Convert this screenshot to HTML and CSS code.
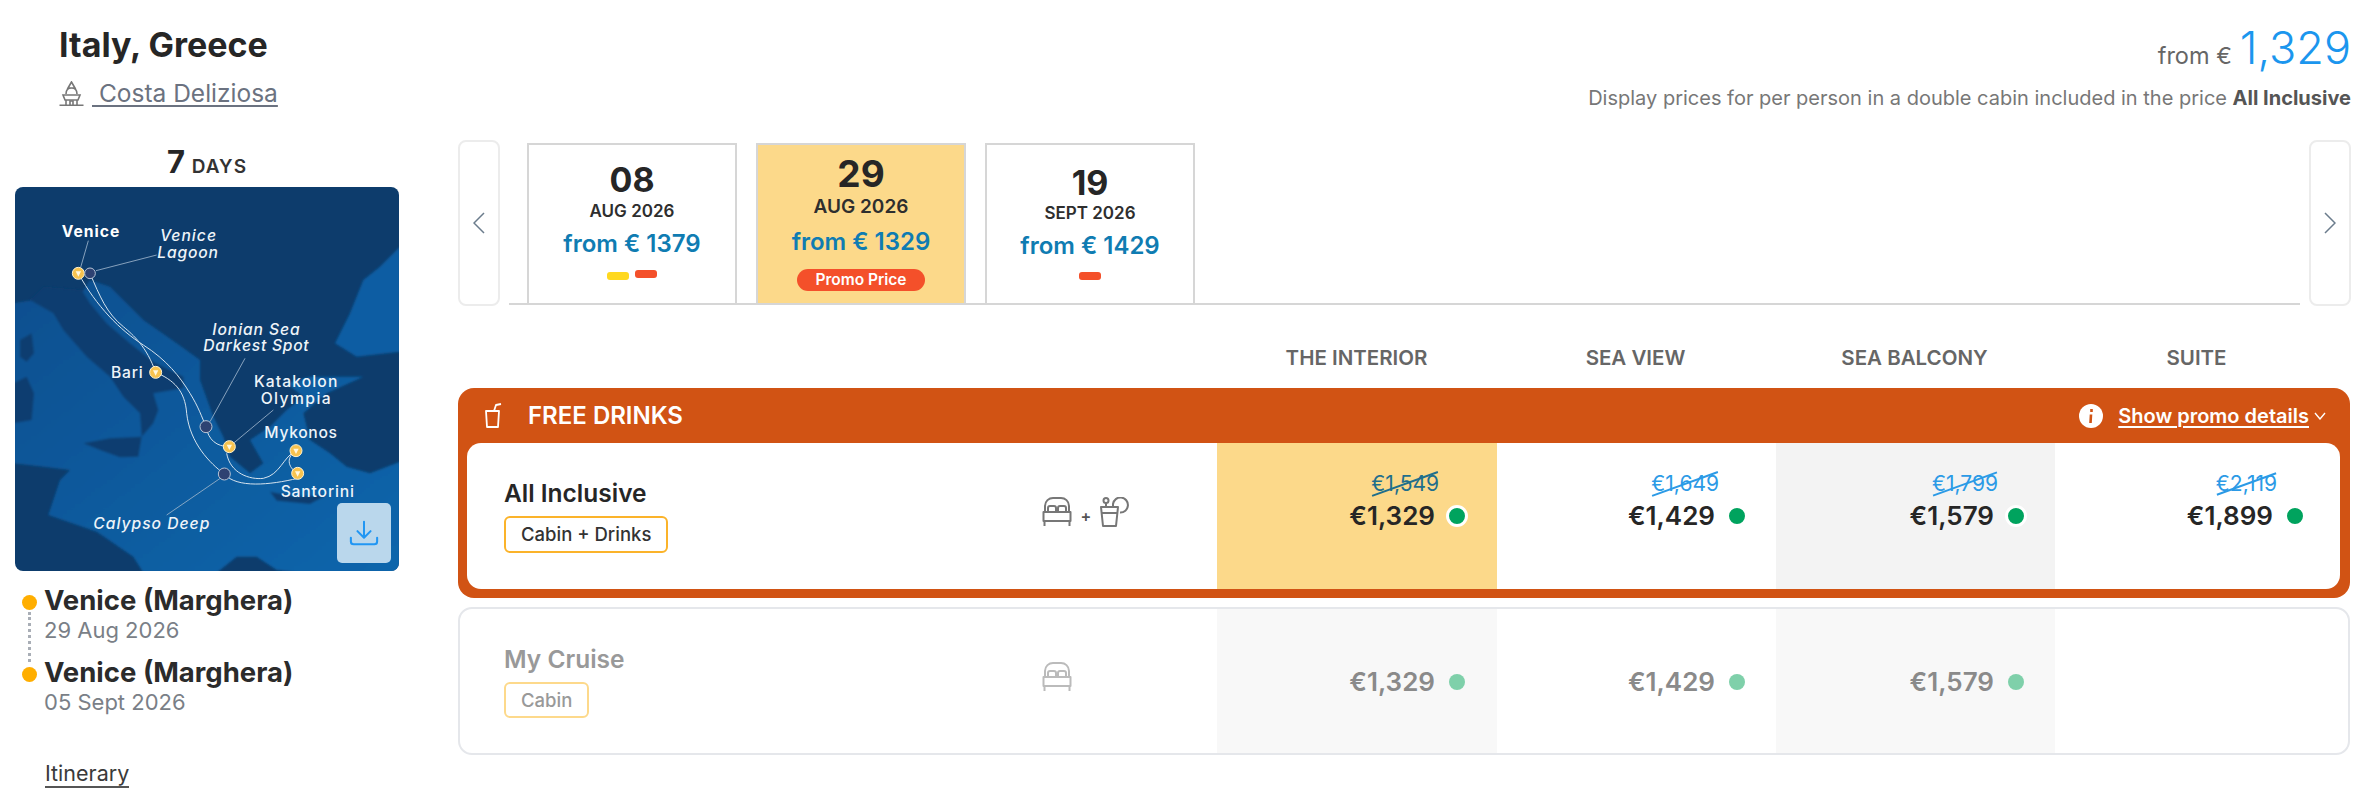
FILE: index.html
```html
<!DOCTYPE html>
<html lang="en">
<head>
<meta charset="UTF-8">
<title>Italy, Greece - Costa Deliziosa</title>
<link rel="stylesheet" href="styles.css">
</head>
<body>
<div class="page">

  <aside class="side">
    <h1 class="title">Italy, Greece</h1>
    <div class="ship">
      <svg class="ship-icon" viewBox="0 0 25 25" fill="none" stroke="#777" stroke-width="1.6">
        <path d="M12.5 1 L9 7 H16 Z M7 13 C7 9 9 7 12.5 7 C16 7 18 9 18 13"/>
        <path d="M4 14 H21 L19 19 H6 Z"/>
        <path d="M7 19 V24 M18 19 V24 M11 24 V20 H14 V24 M0.5 24.2 H24.5"/>
      </svg>
      <a class="ship-name">&nbsp;Costa Deliziosa</a>
    </div>
    <div class="days"><b>7</b> DAYS</div>

    <div class="map">
      <svg class="map-img" viewBox="15 21 1152 1152">
        <defs>
          <linearGradient id="sea" x1="0" y1="0" x2="1" y2="1">
            <stop offset="0" stop-color="#0d4f8f"/>
            <stop offset="1" stop-color="#0a66ac"/>
          </linearGradient>
          <filter id="soft"><feGaussianBlur stdDeviation="3"/></filter>
        </defs>
        <rect x="15" y="21" width="1152" height="1152" fill="#0d3c6c"/>
        <g filter="url(#soft)">
          <path fill="url(#sea)" d="M10 370 L70 360 L215 340 L240 300 L300 320 L400 420 L500 490 L570 540 L570 600 L610 710 L640 770 L660 830 L720 880 L760 850 L720 780 L780 740 L830 690 L880 650 L830 610 L900 590 L1060 590 L950 640 L880 700 L900 780 L960 820 L1010 860 L1080 880 L1170 845 L1170 1178 L870 1178 L800 1170 L740 1130 L680 1130 L620 1178 L400 1178 L370 1130 L260 1055 L115 1005 L150 900 L180 870 L100 860 L10 850 Z"/>
          <path fill="#0e3e70" d="M60 360 L130 400 L160 450 L230 530 L300 590 L340 650 L390 700 L395 770 L430 730 L445 690 L430 640 L520 625 L520 590 L430 545 L360 490 L290 430 L240 370 L215 330 L100 320 Z"/>
          <path fill="#0e3e70" d="M30 480 L65 460 L72 520 L50 545 L30 530 Z M10 610 L50 590 L72 640 L65 720 L10 730 Z M220 790 L300 775 L395 770 L385 830 L330 832 L270 810 Z M780 935 L860 950 L950 945 L900 972 L800 962 Z"/>
          <path fill="#0b5da3" d="M1170 200 L1110 260 L1060 300 L1020 400 L975 490 L1040 530 L1170 515 Z"/>
        </g>
        <g fill="none" stroke="#d5e3ee" stroke-width="3">
          <path d="M205 280 C260 380 330 450 400 495 C470 540 510 590 540 640 C565 680 575 710 588 740 C595 780 620 800 658 800"/>
          <path d="M240 280 C270 350 290 400 340 440 C370 465 410 500 437 577"/>
          <path d="M650 820 C660 880 720 900 760 895 C810 885 820 830 858 812 C830 830 830 860 863 880"/>
          <path d="M863 895 C780 915 680 925 643 882 C600 850 540 790 530 700 C525 630 490 600 437 577"/>
        </g>
        <g stroke="#9fb6cc" stroke-width="2.5" fill="none">
          <path d="M235 182 L212 262 M440 225 L258 272 M705 535 L600 725 M790 690 L670 790 M470 1005 L635 892"/>
        </g>
        <g fill="#f7c34f" stroke="#fff3cf" stroke-width="3">
          <circle cx="205" cy="280" r="18"/>
          <circle cx="437" cy="577" r="18"/>
          <circle cx="658" cy="800" r="18"/>
          <circle cx="858" cy="812" r="18"/>
          <circle cx="863" cy="880" r="18"/>
        </g>
        <g fill="#fff8e0">
          <path d="M197 274 H213 L205 290 Z M429 571 H445 L437 587 Z M650 794 H666 L658 810 Z M850 806 H866 L858 822 Z M855 874 H871 L863 890 Z"/>
        </g>
        <g fill="#2e4272" stroke="#b7c4d6" stroke-width="3">
          <circle cx="240" cy="280" r="16"/>
          <circle cx="588" cy="740" r="18"/>
          <circle cx="643" cy="882" r="18"/>
        </g>
        <g class="map-labels" fill="#eef4f9">
          <text x="155" y="170" class="map-strong" textLength="173">Venice</text>
          <text x="450" y="184" class="map-it" textLength="168">Venice</text>
          <text x="442" y="234" class="map-it" textLength="182">Lagoon</text>
          <text x="607" y="464" class="map-it" textLength="262">Ionian Sea</text>
          <text x="580" y="514" class="map-it" textLength="316">Darkest Spot</text>
          <text x="303" y="594" textLength="95">Bari</text>
          <text x="732" y="622" textLength="250">Katakolon</text>
          <text x="752" y="672" textLength="210">Olympia</text>
          <text x="763" y="774" textLength="218">Mykonos</text>
          <text x="812" y="950" textLength="220">Santorini</text>
          <text x="250" y="1047" class="map-it" textLength="348">Calypso Deep</text>
        </g>
      </svg>
      <button class="map-dl">
        <svg viewBox="0 0 32 28" fill="none" stroke="#2196f3" stroke-width="2.2" stroke-linecap="round" stroke-linejoin="round">
          <path d="M16 2 V18 M9 12 L16 19 L23 12 M2 19 V23 C2 25 3 26 5 26 H27 C29 26 30 25 30 23 V19"/>
        </svg>
      </button>
    </div>

    <div class="stops">
      <div class="stop">
        <span class="stop-dot"></span>
        <div><div class="stop-name">Venice (Marghera)</div><div class="stop-date">29 Aug 2026</div></div>
      </div>
      <div class="stop">
        <span class="stop-dot"></span>
        <div><div class="stop-name">Venice (Marghera)</div><div class="stop-date">05 Sept 2026</div></div>
      </div>
    </div>
    <a class="itinerary">Itinerary</a>
  </aside>

  <main class="main">
    <div class="from"><span class="from-label">from €</span> <span class="from-num">1,329</span></div>
    <p class="note">Display prices for per person in a double cabin included in the price <b>All Inclusive</b></p>

    <div class="dates">
      <button class="arrow">
        <svg viewBox="0 0 12 22" fill="none" stroke="#6b7c8c" stroke-width="1.5"><path d="M11 1 L1 11 L11 21"/></svg>
      </button>
      <div class="tabs">
        <div class="tab">
          <div class="tab-day">08</div>
          <div class="tab-month">AUG 2026</div>
          <div class="tab-price">from € 1379</div>
          <div class="tab-marks"><span class="mark mark-yellow"></span><span class="mark mark-red"></span></div>
        </div>
        <div class="tab tab-active">
          <div class="tab-day">29</div>
          <div class="tab-month">AUG 2026</div>
          <div class="tab-price">from € 1329</div>
          <div class="promo">Promo Price</div>
        </div>
        <div class="tab tab-third">
          <div class="tab-day">19</div>
          <div class="tab-month">SEPT 2026</div>
          <div class="tab-price">from € 1429</div>
          <div class="tab-marks"><span class="mark mark-red"></span></div>
        </div>
      </div>
      <button class="arrow">
        <svg viewBox="0 0 12 22" fill="none" stroke="#6b7c8c" stroke-width="1.5"><path d="M1 1 L11 11 L1 21"/></svg>
      </button>
    </div>

    <div class="heads">
      <div></div>
      <div class="head">THE INTERIOR</div>
      <div class="head">SEA VIEW</div>
      <div class="head">SEA BALCONY</div>
      <div class="head">SUITE</div>
    </div>

    <section class="offer">
      <div class="offer-top">
        <div class="offer-name">
          <svg class="cup" viewBox="0 0 20 26" fill="none" stroke="#fff" stroke-width="1.8" stroke-linejoin="round">
            <path d="M2 8 H15 L14 24 H3 Z M10 8 L12 2 L17 1"/>
          </svg>
          FREE DRINKS
        </div>
        <div class="offer-more">
          <svg class="info" viewBox="0 0 24 24"><circle cx="12" cy="12" r="12" fill="#fff"/><path d="M12.5 5 V8 M12 10.5 L11.5 19" stroke="#d15314" stroke-width="2.6" fill="none"/></svg>
          <a class="offer-link">Show promo details</a>
          <svg class="chev" viewBox="0 0 12 8" fill="none" stroke="#fff" stroke-width="1.4"><path d="M1 1 L6 7 L11 1"/></svg>
        </div>
      </div>
      <div class="row row-main">
        <div class="plan">
          <div class="plan-info">
            <div class="plan-name">All Inclusive</div>
            <span class="plan-tag">Cabin + Drinks</span>
          </div>
          <div class="plan-icons">
            <svg class="bed" viewBox="0 0 30 30" fill="none" stroke="#777" stroke-width="2" stroke-linejoin="round">
              <path d="M3 15 V9 C3 4 7 1 11 1 H19 C23 1 27 4 27 9 V15"/>
              <path d="M6 15 V11 C6 9.500 7 9 8 9 H12 C13.500 9 14 10 14 11 V15 M16 15 V11 C16 9.500 17 9 18 9 H22 C23.500 9 24 10 24 11 V15"/>
              <path d="M1.500 15 H28.500 V24 H1.500 Z M2.500 24 V29 M27.500 24 V29"/>
            </svg>
            <span class="plus">+</span>
            <svg class="drink" viewBox="0 0 30 30" fill="none" stroke="#777" stroke-width="2" stroke-linejoin="round">
              <circle cx="6" cy="3.500" r="2.500"/>
              <path d="M6 6 V10 M1 10 H18 L16 29 H3 Z M2 16 H17"/>
              <path d="M13 10 V7 A7.500 7.500 0 1 1 20 15.500"/>
            </svg>
          </div>
        </div>
        <div class="cell cell-sel">
          <div class="box">
            <div class="old old-dark">€1,549</div>
            <div class="now">€1,329<span class="dot"></span></div>
          </div>
        </div>
        <div class="cell">
          <div class="box">
            <div class="old">€1,649</div>
            <div class="now">€1,429<span class="dot"></span></div>
          </div>
        </div>
        <div class="cell cell-grey">
          <div class="box">
            <div class="old">€1,799</div>
            <div class="now">€1,579<span class="dot"></span></div>
          </div>
        </div>
        <div class="cell">
          <div class="box">
            <div class="old">€2,119</div>
            <div class="now">€1,899<span class="dot"></span></div>
          </div>
        </div>
      </div>
    </section>

    <section class="row row-off">
      <div class="plan">
        <div class="plan-info">
          <div class="plan-name">My Cruise</div>
          <span class="plan-tag">Cabin</span>
        </div>
        <div class="plan-icons">
          <svg class="bed" viewBox="0 0 30 30" fill="none" stroke="#bbb" stroke-width="2" stroke-linejoin="round">
            <path d="M3 15 V9 C3 4 7 1 11 1 H19 C23 1 27 4 27 9 V15"/>
            <path d="M6 15 V11 C6 9.500 7 9 8 9 H12 C13.500 9 14 10 14 11 V15 M16 15 V11 C16 9.500 17 9 18 9 H22 C23.500 9 24 10 24 11 V15"/>
            <path d="M1.500 15 H28.500 V24 H1.500 Z M2.500 24 V29 M27.500 24 V29"/>
          </svg>
        </div>
      </div>
      <div class="cell cell-soft"><div class="box"><div class="now">€1,329<span class="dot"></span></div></div></div>
      <div class="cell"><div class="box"><div class="now">€1,429<span class="dot"></span></div></div></div>
      <div class="cell cell-soft"><div class="box"><div class="now">€1,579<span class="dot"></span></div></div></div>
      <div class="cell"></div>
    </section>
  </main>

</div>
</body>
</html>
```

FILE: styles.css
```css
* {
  box-sizing: border-box;
}

body {
  margin: 0;
  background: #fff;
  color: #262626;
  font-family: Inter, "Noto Sans", "Liberation Sans", sans-serif;
}

.page {
  display: flex;
  width: 2365px;
  height: 800px;
  overflow: hidden;
}

/* left column */
.side {
  width: 458px;
  flex: none;
}

.title {
  margin: 0;
  padding: 27px 0 0 59px;
  font-size: 34px;
  line-height: 36px;
  font-weight: 700;
}

.ship {
  display: flex;
  align-items: center;
  height: 36px;
  margin-top: 12px;
  padding-left: 59px;
}

.ship-icon {
  width: 25px;
  height: 25px;
  margin-right: 8px;
}

.ship-name {
  color: #6b7280;
  font-size: 24.500px;
  text-decoration: underline;
  text-underline-offset: 3px;
}

.days {
  width: 384px;
  height: 36px;
  margin: 33px 0 7px 15px;
  text-align: center;
  font-size: 19px;
  line-height: 36px;
  font-weight: 600;
  letter-spacing: 1px;
  color: #333;
}

.days b {
  font-size: 31px;
  font-weight: 700;
  color: #262626;
}

.map {
  position: relative;
  width: 384px;
  height: 384px;
  margin: 0 0 0 15px;
  border-radius: 8px;
  overflow: hidden;
}

.map-img {
  display: block;
  width: 384px;
  height: 384px;
}

.map-labels {
  font-size: 47px;
  font-weight: 500;
}

.map-strong {
  font-weight: 700;
  fill: #fff;
}

.map-it {
  font-style: italic;
}

.map-dl {
  position: absolute;
  right: 8px;
  bottom: 8px;
  width: 54px;
  height: 60px;
  padding: 0;
  border: none;
  border-radius: 5px;
  background: #bad7ec;
  display: flex;
  align-items: center;
  justify-content: center;
}

.map-dl svg {
  width: 30px;
  height: 28px;
}

.stops {
  margin: 14px 0 0 22px;
}

.stop {
  position: relative;
  display: flex;
  gap: 7px;
  margin-bottom: 12px;
}

.stop:first-child::after {
  content: "";
  position: absolute;
  left: 6px;
  top: 27px;
  height: 50px;
  border-left: 3px dotted #a9aeb6;
}

.stop-dot {
  flex: none;
  width: 15px;
  height: 15px;
  margin-top: 10px;
  border-radius: 50%;
  background: #ffae00;
}

.stop-name {
  font-size: 27.500px;
  line-height: 30px;
  font-weight: 700;
  color: #2b2b2b;
}

.stop-date {
  font-size: 22px;
  line-height: 30px;
  color: #7a7f87;
}

.itinerary {
  display: inline-block;
  margin: 31px 0 0 45px;
  border-bottom: 2px solid #555;
  font-size: 21.500px;
  line-height: 26px;
  color: #3a3a3a;
}

/* right column */
.main {
  width: 1893px;
  flex: none;
}

.from {
  display: flex;
  justify-content: flex-end;
  align-items: baseline;
  gap: 8px;
  height: 56px;
  margin-top: 20px;
  line-height: 56px;
}

.from-label {
  font-size: 23.500px;
  color: #666;
}

.from-num {
  font-size: 45px;
  font-weight: 300;
  color: #1b96ee;
}

.note {
  margin: 10px 0 0;
  text-align: right;
  font-size: 20px;
  line-height: 24px;
  color: #777;
}

.note b {
  font-weight: 700;
  color: #555;
}

.dates {
  display: flex;
  height: 166px;
  margin-top: 30px;
  gap: 9px;
}

.arrow {
  flex: none;
  width: 42px;
  height: 166px;
  padding: 0;
  background: #fff;
  border: 2px solid #ececec;
  border-radius: 8px;
  display: flex;
  align-items: center;
  justify-content: center;
}

.arrow svg {
  width: 12px;
  height: 22px;
}

.tabs {
  flex: 1;
  display: flex;
  align-items: flex-end;
  gap: 19px;
  height: 165px;
  padding-left: 18px;
  border-bottom: 2px solid #d6d6d6;
}

.tab {
  display: flex;
  flex-direction: column;
  align-items: center;
  width: 210px;
  height: 160px;
  padding-top: 17px;
  border: 2px solid #d6d6d6;
  border-bottom: none;
  background: #fff;
}

.tab-third {
  padding-top: 20px;
}

.tab-active {
  padding-top: 11px;
  background: #fcd98a;
}

.tab-day {
  font-size: 34px;
  line-height: 36px;
  font-weight: 700;
}

.tab-active .tab-day {
  font-size: 37px;
}

.tab-month {
  margin-top: 4px;
  font-size: 17px;
  line-height: 18px;
  font-weight: 600;
  color: #2e2e2e;
}

.tab-third .tab-month {
  margin-top: 3px;
}

.tab-active .tab-month {
  margin-top: 6px;
  font-size: 19px;
}

.tab-price {
  margin-top: 11px;
  font-size: 24px;
  line-height: 26px;
  font-weight: 600;
  color: #0f7cb2;
}

.tab-active .tab-price {
  margin-top: 13px;
}

.tab-marks {
  display: flex;
  gap: 6px;
  margin-top: 13px;
}

.mark {
  width: 22px;
  height: 8px;
  border-radius: 3px;
}

.mark-yellow {
  margin-top: 2px;
  background: #ffd81f;
}

.mark-red {
  background: #f4502a;
}

.promo {
  margin-top: 14px;
  width: 128px;
  height: 22px;
  border-radius: 11px;
  background: #f4502a;
  color: #fff;
  text-align: center;
  font-size: 15.500px;
  line-height: 22px;
  font-weight: 600;
}

.heads {
  display: grid;
  grid-template-columns: 759px repeat(3, 279px) 285px;
  height: 28px;
  margin-top: 38px;
}

.head {
  text-align: center;
  font-size: 20.500px;
  line-height: 28px;
  font-weight: 600;
  color: #666;
}

.offer {
  width: 1892px;
  height: 210px;
  margin-top: 16px;
  padding: 0 10px 9px 9px;
  border-radius: 16px;
  background: #d15314;
}

.offer-top {
  display: flex;
  align-items: center;
  justify-content: space-between;
  height: 55px;
  padding-left: 17px;
  padding-right: 14px;
  color: #fff;
}

.offer-name {
  display: flex;
  align-items: center;
  gap: 24px;
  font-size: 24px;
  font-weight: 600;
}

.cup {
  width: 20px;
  height: 26px;
}

.offer-more {
  display: flex;
  align-items: center;
}

.info {
  width: 24px;
  height: 24px;
  margin-right: 15px;
}

.offer-link {
  font-size: 20px;
  font-weight: 600;
  text-decoration: underline;
  text-underline-offset: 3px;
}

.chev {
  width: 12px;
  height: 8px;
  margin-left: 5px;
}

.row {
  display: grid;
  grid-template-columns: 750px 280px 279px 279px 1fr;
  height: 146px;
  overflow: hidden;
  border-radius: 14px;
  background: #fff;
}

.row-off {
  grid-template-columns: 757px 280px 279px 279px 1fr;
  width: 1892px;
  height: 148px;
  margin-top: 9px;
  border: 2px solid #e5e7eb;
  color: #8a8a8a;
}

.plan {
  display: flex;
  align-items: center;
  padding-left: 37px;
}

.row-off .plan {
  padding-left: 44px;
}

.plan-info {
  width: 538px;
  flex: none;
}

.plan-name {
  font-size: 24.500px;
  line-height: 28px;
  font-weight: 600;
  margin-bottom: 9px;
}

.row-off .plan-name {
  color: #999;
}

.plan-tag {
  display: inline-block;
  height: 37px;
  padding: 0 15px;
  border: 2px solid #fbb32a;
  border-radius: 6px;
  font-size: 18.500px;
  line-height: 33px;
  font-weight: 500;
  color: #333;
}

.row-off .plan-tag {
  height: 36px;
  line-height: 32px;
  border-color: #fdd98b;
  color: #999;
}

.plan-icons {
  display: flex;
  align-items: flex-end;
  margin-top: -8px;
}

.bed,
.drink {
  width: 30px;
  height: 30px;
}

.plus {
  width: 28px;
  text-align: center;
  font-size: 16px;
  line-height: 22px;
  font-weight: 600;
  color: #555;
}

.cell {
  display: flex;
  align-items: center;
}

.cell-sel {
  background: #fcd98a;
}

.cell-grey {
  background: #f3f3f3;
}

.cell-soft {
  background: #f8f8f8;
}

.box {
  width: 251px;
  text-align: right;
}

.row-main .box {
  height: 100%;
  padding-top: 26px;
}

.old {
  position: relative;
  display: inline-block;
  margin-right: 29px;
  font-size: 21px;
  line-height: 30px;
  color: #2b9ae6;
}

.old::after {
  content: "";
  position: absolute;
  left: -1px;
  right: -1px;
  top: 14px;
  height: 2px;
  background: currentColor;
  transform: rotate(-20deg);
}

.old-dark {
  color: #1f6e8c;
}

.now {
  display: flex;
  justify-content: flex-end;
  align-items: center;
  margin-top: 2px;
  font-size: 26px;
  line-height: 30px;
  font-weight: 600;
}

.dot {
  width: 22px;
  height: 22px;
  margin-left: 11px;
  border: 3px solid #fff;
  border-radius: 50%;
  background: #00a35e;
}

.row-off .dot {
  border-color: transparent;
  background: #7fd0aa;
  background-clip: padding-box;
}
```
